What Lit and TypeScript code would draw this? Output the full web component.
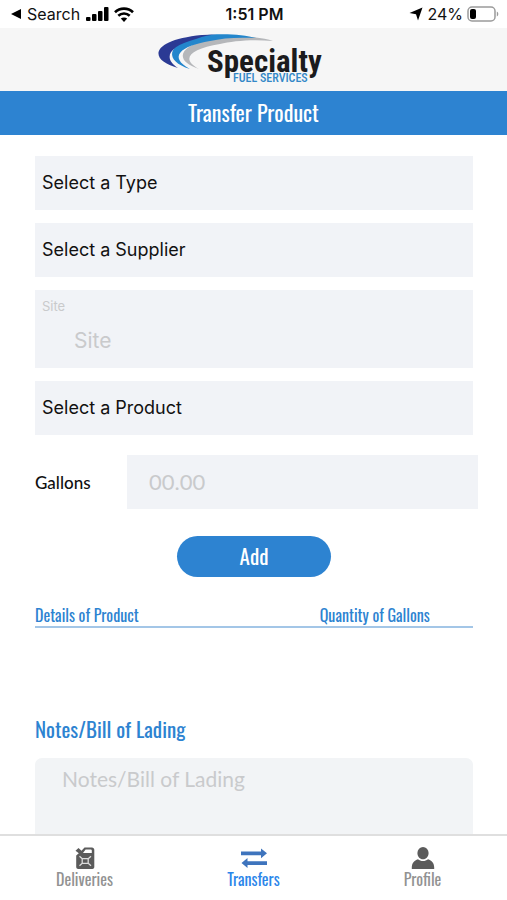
import { LitElement, html, css, svg } from "lit";
import { customElement, state } from "lit/decorators.js";

const deliveriesIcon = svg`
  <svg class="icon" viewBox="0 0 24 24" width="24" height="24" aria-hidden="true">
    <path fill="#5b5b5b" fill-rule="evenodd" d="M2.500 4.800 5.500 2l3 2.700L11.500 1.500H19c1.300 0 2.300 1 2.300 2.300V21c0 1.100-.9 2-2 2H5.200c-1.100 0-2-.9-2-2V9.500l2.600-2.200zM12.600 3.600 10 7h8.800V4.500c0-.5-.4-.9-.9-.9z"/>
    <path fill="none" stroke="#dcdcdc" stroke-width="1.300" d="M9.200 12.700h6v4.600h-6zM6.500 10.200l2.700 2.500M18 10.200l-2.800 2.500M6.500 19.800l2.700-2.500M18 19.800l-2.800-2.500"/>
  </svg>`;

const transfersIcon = svg`
  <svg class="icon" viewBox="0 0 28 24" width="28" height="24" aria-hidden="true">
    <path fill="#3e74bd" d="M1 5.500h20V2.500L27 7.300l-6 4.900V9.300H1zM27 15.200H7.500V12L1.500 17l6 5v-3H27z"/>
  </svg>`;

const profileIcon = svg`
  <svg class="icon" viewBox="0 0 24 24" width="24" height="24" aria-hidden="true">
    <path fill="#5b5b5b" d="M12 1a5.600 6 0 0 1 5.600 6c0 3.500-2.500 6.300-5.600 6.300S6.400 10.500 6.400 7A5.600 6 0 0 1 12 1z"/>
    <path fill="#5b5b5b" d="M7 13.200c1.400 1.200 3 1.800 5 1.800s3.600-.6 5-1.800c3.800 1.200 6.200 4 6.200 8.300v1.500H.8v-1.500c0-4.300 2.400-7.100 6.200-8.300z"/>
  </svg>`;

@customElement("app-root")
export class AppRoot extends LitElement {
  @state() private active = "Transfers";

  private tabs = [
    { name: "Deliveries", icon: deliveriesIcon },
    { name: "Transfers", icon: transfersIcon },
    { name: "Profile", icon: profileIcon },
  ];

  static styles = css`
    :host {
      --blue: #2d83d1;
      --field: #f1f3f7;
      --hint: #c9cacc;
      --narrow: Oswald, "Liberation Sans Narrow", "Roboto Condensed", "Liberation Sans", sans-serif;
      --logo: "Liberation Sans Narrow", "Roboto Condensed", Oswald, "Liberation Sans", sans-serif;
      display: flex;
      flex-direction: column;
      height: 100vh;
      background: #fff;
      color: #111;
      font-family: Inter, sans-serif;
    }
    * { box-sizing: border-box; }
    .status {
      display: grid;
      grid-template-columns: 1fr auto 1fr;
      align-items: center;
      height: 28px;
      padding: 0 8px 0 10px;
      font-size: 16px;
      line-height: 28px;
      flex: none;
    }
    .side { display: flex; align-items: center; gap: 5px; }
    .end { justify-content: flex-end; gap: 4px; }
    .time { font-weight: 600; }
    .brand {
      display: flex;
      justify-content: center;
      align-items: center;
      height: 63px;
      background: #f6f6f6;
      padding-right: 25px;
      flex: none;
    }
    .logo-name { font: 700 31px var(--logo); fill: #1b1b1d; }
    .logo-sub { font: 500 12px var(--logo); fill: #3388c8; }
    .title {
      margin: 0;
      height: 44px;
      background: var(--blue);
      color: #fff;
      font: 400 22px/42px var(--narrow);
      text-align: center;
      flex: none;
    }
    main {
      flex: 1;
      min-height: 0;
      overflow: auto;
      scrollbar-width: none;
      padding: 21px 34px 0 35px;
    }
    form { display: flex; flex-direction: column; gap: 13px; }
    select, input, textarea {
      display: block;
      width: 100%;
      border: 0;
      border-radius: 0;
      margin: 0;
      outline: none;
      background: var(--field);
      color: #111;
      appearance: none;
    }
    select { height: 54px; padding: 0 7px 2px; font: 400 18px Inter, sans-serif; }
    ::placeholder { color: var(--hint); opacity: 1; }
    .site { background: var(--field); height: 78px; padding: 8px 7px; color: var(--hint); }
    .site label { display: block; font-size: 13px; line-height: 17px; }
    .site input { height: 50px; padding: 0 32px; font: 400 21px Inter, sans-serif; }
    .gallons { display: flex; align-items: center; margin: 7px -5px 0 0; }
    .gallons label { width: 92px; flex: none; font: 500 17px Lato, sans-serif; }
    .gallons input { height: 54px; padding: 0 22px 2px; font: 400 22px Lato, sans-serif; }
    .add {
      align-self: center;
      width: 154px;
      height: 41px;
      margin-top: 14px;
      padding: 0 0 2px;
      border: 0;
      border-radius: 21px;
      background: var(--blue);
      color: #fff;
      font: 400 21px var(--narrow);
    }
    table { width: 100%; margin-top: 14px; border-collapse: collapse; table-layout: fixed; }
    th {
      padding: 0;
      border-bottom: 2px solid #a3c6e7;
      color: var(--blue);
      font: 400 16px/22px var(--narrow);
      text-align: left;
    }
    .details { width: 65%; }
    .notes { display: block; margin: 73px 0 14px; color: var(--blue); font: 400 21px/30px var(--narrow); }
    textarea {
      height: 150px;
      resize: none;
      border-radius: 7px;
      background: #f2f4f6;
      padding: 7px 27px;
      font: 400 21px/28px Lato, sans-serif;
    }
    nav {
      display: grid;
      grid-template-columns: repeat(3, 1fr);
      height: 66px;
      border-top: 2px solid #dfdfdf;
      background: #fff;
      flex: none;
    }
    nav a {
      display: flex;
      flex-direction: column;
      align-items: center;
      padding-top: 10px;
      color: #929292;
      font: 400 16px/18px var(--narrow);
      text-decoration: none;
    }
    nav a.on { color: #2b86ea; }
    .icon { display: block; }
  `;

  render() {
    return html`
      <div class="status">
        <div class="side">
          <svg width="12" height="12" viewBox="0 0 12 12" aria-hidden="true"><path d="M1 6 11 1v10z"/></svg>
          <span>Search</span>
          <svg width="24" height="16" viewBox="0 0 24 16" aria-hidden="true">
            <rect x="1" y="11" width="4.500" height="4" rx="1"/><rect x="7" y="8" width="4.500" height="7" rx="1"/>
            <rect x="13" y="5" width="4.500" height="10" rx="1"/><rect x="19" y="1" width="4.500" height="14" rx="1"/>
          </svg>
          <svg width="20" height="15" viewBox="0 0 20 15" aria-hidden="true">
            <g fill="none" stroke="#000" stroke-width="2.600"><path d="M1 5.300c5-4.900 13-4.900 18 0M4.300 8.800c3.200-3 8.200-3 11.400 0"/></g>
            <path d="M10 15 6.800 11.600c1.700-1.600 4.700-1.600 6.400 0z"/>
          </svg>
        </div>
        <div class="time">1:51 PM</div>
        <div class="side end">
          <svg width="14" height="14" viewBox="0 0 14 14" aria-hidden="true"><path d="M13.500 .5 9 13.500 7 7.200 .5 6z"/></svg>
          <span>24%</span>
          <svg width="32" height="16" viewBox="0 0 32 16" aria-hidden="true">
            <rect x="1" y="1" width="27" height="14" rx="4" fill="#fff" stroke="#9b9b9b" stroke-width="1.500"/>
            <rect x="3" y="3" width="6" height="10" rx="2"/><path fill="#9b9b9b" d="M29.800 5.500c2 .8 2 4.200 0 5z"/>
          </svg>
        </div>
      </div>
      <header class="brand">
        <svg width="170" height="56" viewBox="0 0 170 56" role="img" aria-label="Specialty Fuel Services">
          <path fill="#b5b7ba" d="M43 37C18 29 22 14 54 7c22-4 50-3 63 2-21-2-41 0-53 3C34 17 24 27 43 37z"/>
          <path fill="#2386cc" d="M34 37C8 29 10 12 42 4c20-3 44-2 58 2-18-1-34 0-46 3C24 14 12 25 34 37z"/>
          <path fill="#2b3a94" d="M22 36C-8 28-6 8 46 3l14-.5C54 3 48 4 40 7 10 15 8 27 22 36z"/>
          <text class="logo-name" x="51" y="40">Specialty</text>
          <text class="logo-sub" x="77" y="50">FUEL SERVICES</text>
        </svg>
      </header>
      <h1 class="title">Transfer Product</h1>
      <main>
        <form @submit=${(e: Event) => e.preventDefault()}>
          <select aria-label="Type"><option>Select a Type</option></select>
          <select aria-label="Supplier"><option>Select a Supplier</option></select>
          <div class="site">
            <label for="site">Site</label>
            <input id="site" placeholder="Site" />
          </div>
          <select aria-label="Product"><option>Select a Product</option></select>
          <div class="gallons">
            <label for="gallons">Gallons</label>
            <input id="gallons" inputmode="decimal" placeholder="00.00" />
          </div>
          <button class="add">Add</button>
          <table>
            <thead><tr><th class="details" scope="col">Details of Product</th><th scope="col">Quantity of Gallons</th></tr></thead>
          </table>
          <div>
            <label class="notes" for="notes">Notes/Bill of Lading</label>
            <textarea id="notes" placeholder="Notes/Bill of Lading"></textarea>
          </div>
        </form>
      </main>
      <nav>
        ${this.tabs.map(
          (t) => html`<a href="#${t.name}" class=${t.name === this.active ? "on" : ""}
            @click=${() => (this.active = t.name)}>${t.icon}<span>${t.name}</span></a>`
        )}
      </nav>
    `;
  }
}
